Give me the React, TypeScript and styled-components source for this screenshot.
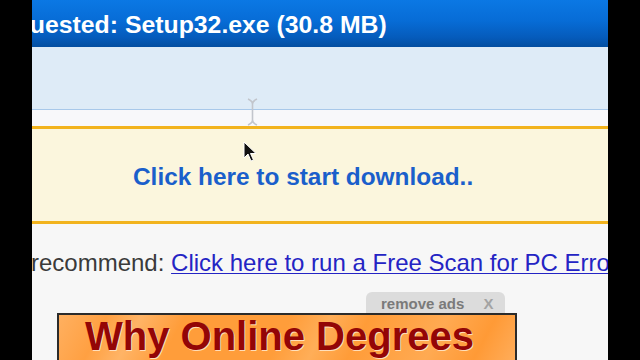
import React from "react";
import styled, { createGlobalStyle } from "styled-components";

const Global = createGlobalStyle`
  html, body { margin: 0; padding: 0; background: #000; }
  body { font-family: "Liberation Sans", Arial, sans-serif; }
`;

const Screen = styled.div`
  position: relative;
  width: 640px;
  height: 360px;
  background: #000;
  display: flex;
  justify-content: center;
  overflow: hidden;
`;

const Page = styled.div`
  width: 576px;
  height: 360px;
  background: #f7f7f7;
  overflow: hidden;
  display: flex;
  flex-direction: column;
`;

const Header = styled.div`
  height: 47px;
  flex: none;
  box-sizing: border-box;
  padding-top: 2px;
  background: linear-gradient(to bottom, #0b78e4 0%, #076cd6 45%, #055bbb 80%, #034ea0 100%);
  overflow: hidden;
  white-space: nowrap;
`;

const HeaderTitle = styled.div`
  margin-left: -49px;
  font-size: 24.8px;
  line-height: 45px;
  font-weight: bold;
  color: #ffffff;
`;

const InfoBand = styled.div`
  height: 62px;
  flex: none;
  background: #deebf7;
  border-bottom: 1px solid #a8c8ea;
`;

const Spacer = styled.div<{ $h: number; $bg: string }>`
  height: ${(p) => p.$h}px;
  flex: none;
  background: ${(p) => p.$bg};
`;

const DownloadBox = styled.div`
  flex: none;
  height: 92px;
  box-sizing: content-box;
  border-top: 3px solid #f2b31d;
  border-bottom: 3px solid #f2b31d;
  background: #fbf6dd;
  padding-left: 101px;
`;

const DownloadLink = styled.div`
  padding-top: 34px;
  font-size: 24.4px;
  line-height: 27px;
  font-weight: bold;
  color: #1a5fcb;
  white-space: nowrap;
`;

const RecommendLine = styled.div`
  margin-top: 25px;
  margin-left: -1px;
  font-size: 24px;
  line-height: 27px;
  color: #3a3a3a;
  white-space: nowrap;
  flex: none;
`;

const ScanLink = styled.span`
  color: #2424c4;
  text-decoration: underline;
  text-decoration-thickness: 1px;
  text-underline-offset: 2px;
`;

const AdArea = styled.div`
  margin-top: 16px;
  margin-left: 25px;
  width: 460px;
  display: flex;
  flex-direction: column;
  flex: none;
`;

const RemoveTab = styled.div`
  align-self: flex-end;
  margin-right: 12px;
  width: 139px;
  height: 21px;
  box-sizing: border-box;
  background: #dcdcdc;
  border-radius: 6px 6px 0 0;
  display: flex;
  align-items: center;
  padding-left: 15px;
  padding-top: 1px;
  font-size: 15px;
  font-weight: bold;
  color: #7a7a7a;
  white-space: nowrap;
`;

const CloseX = styled.span`
  margin-left: 19px;
  color: #a3a3a3;
`;

const Banner = styled.div`
  height: 60px;
  border: 2px solid #2b2b2b;
  border-bottom: none;
  background:
    linear-gradient(118deg, #ffb060 0%, #ffa042 10%, #ffb466 17%, #ff9d3a 26%, #ff9d3a 48%, #ffae58 56%, #ff9c38 64%, #ffaa52 80%, #ff9a36 90%, #ffb060 100%);
  padding-left: 26px;
  box-sizing: border-box;
`;

const BannerTitle = styled.div`
  font-size: 40px;
  line-height: 42px;
  font-weight: bold;
  color: #930606;
  text-shadow: 1px 1px 0 rgba(255, 240, 220, 0.8);
  white-space: nowrap;
`;

const CursorLayer = styled.div<{ $x: number; $y: number }>`
  position: absolute;
  left: ${(p) => p.$x}px;
  top: ${(p) => p.$y}px;
  pointer-events: none;
  line-height: 0;
`;

export default function App() {
  return (
    <Screen>
      <Global />
      <Page>
        <Header>
          <HeaderTitle>Requested: Setup32.exe (30.8 MB)</HeaderTitle>
        </Header>
        <InfoBand />
        <Spacer $h={16} $bg="#f8f8fa" />
        <DownloadBox>
          <DownloadLink>Click here to start download..</DownloadLink>
        </DownloadBox>
        <RecommendLine>
          recommend: <ScanLink>Click here to run a Free Scan for PC Errors</ScanLink>
        </RecommendLine>
        <AdArea>
          <RemoveTab>
            remove ads<CloseX>X</CloseX>
          </RemoveTab>
          <Banner>
            <BannerTitle>Why Online Degrees</BannerTitle>
          </Banner>
        </AdArea>
      </Page>
      <CursorLayer $x={247} $y={98}>
        <svg width="11" height="28" viewBox="0 0 11 28">
          <path d="M1 1 Q5.5 3 5.5 6 L5.5 22 Q5.5 25 1 27 M10 1 Q5.5 3 5.5 6 M5.5 22 Q5.5 25 10 27" stroke="#c2c5cc" strokeWidth="1.6" fill="none" />
        </svg>
      </CursorLayer>
      <CursorLayer $x={243} $y={141}>
        <svg width="14" height="22" viewBox="0 0 14 22">
          <path d="M1 1 L1 17 L5 13 L8 20 L10.5 19 L7.5 12.5 L13 12.5 Z" fill="#111" stroke="#fff" strokeWidth="1" strokeLinejoin="round" />
        </svg>
      </CursorLayer>
    </Screen>
  );
}
